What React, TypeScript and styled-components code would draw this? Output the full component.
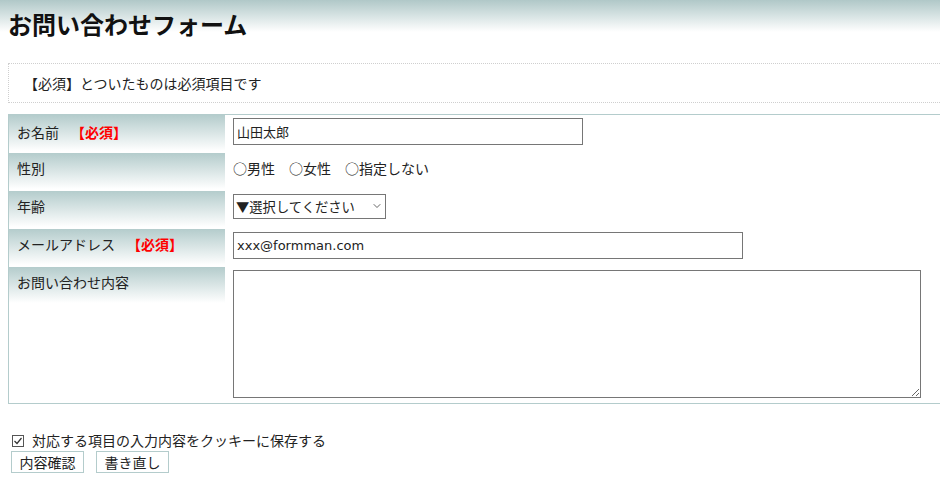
import React from "react";
import styled, { createGlobalStyle } from "styled-components";
import { ChevronDown } from "lucide-react";

const Global = createGlobalStyle`
  html, body { margin: 0; padding: 0; background: #fff; overflow: hidden; }
  body {
    font-family: "Noto Sans CJK JP", "Noto Sans", sans-serif;
    color: #222;
    font-size: 14px;
  }
`;

const Header = styled.header`
  background: linear-gradient(#b0c8c8 0px, #ffffff 32px);
  height: 50px;
  padding: 0 8px;
`;

const Title = styled.h1`
  margin: 0;
  font-size: 24px;
  font-weight: bold;
  line-height: 48px;
  color: #111;
`;

const Page = styled.main`
  padding-left: 8px;
  width: 1000px;
`;

const Notice = styled.p`
  margin: 13px 0 0;
  height: 40px;
  box-sizing: border-box;
  border: 1px dotted #cfcfcf;
  padding-left: 15px;
  line-height: 38px;
  font-size: 14px;
`;

const Table = styled.div`
  margin-top: 11px;
  border: 1px solid #b4cccc;
  display: flex;
  flex-direction: column;
`;

const Row = styled.div<{ $h?: number }>`
  display: flex;
  height: ${(p) => p.$h ?? 38}px;
`;

const Label = styled.div<{ $top?: number }>`
  width: 216px;
  box-sizing: border-box;
  padding: ${(p) => p.$top ?? 5}px 8px 0;
  line-height: 20px;
  background: #fff linear-gradient(#b4cccc 0px, #ffffff 36px) no-repeat;
  background-size: 100% 37px;
`;

const Required = styled.span`
  color: #f00;
  font-weight: bold;
  margin-left: 5px;
`;

const Value = styled.div`
  flex: 1;
  padding: 3px 0 0 8px;
`;

const TextInput = styled.input<{ $w: number }>`
  width: ${(p) => p.$w}px;
  height: 27px;
  box-sizing: border-box;
  border: 1px solid #767676;
  padding: 0 3px;
  font-family: "DejaVu Sans", "Noto Sans CJK JP", sans-serif;
  font-size: 13px;
  color: #222;
  outline: none;
  margin: 0;
`;

const Radios = styled.div`
  line-height: 24px;
  font-size: 14px;
  white-space: pre;
`;

const SelectWrap = styled.span`
  position: relative;
  display: inline-block;
`;

const Select = styled.select`
  appearance: none;
  width: 153px;
  height: 25px;
  box-sizing: border-box;
  border: 1px solid #767676;
  border-radius: 0;
  background: #fff;
  padding: 0 0 0 2px;
  font-family: "Noto Sans CJK JP", "Noto Sans", sans-serif;
  font-size: 13.3px;
  color: #222;
  margin: 0;
`;

const Chevron = styled(ChevronDown)`
  position: absolute;
  right: 3px;
  top: 6px;
  pointer-events: none;
  color: #333;
`;

const TextArea = styled.textarea`
  width: 688px;
  height: 128px;
  box-sizing: border-box;
  border: 1px solid #767676;
  margin: 0;
  display: block;
  font-family: "Noto Sans CJK JP", "Noto Sans", sans-serif;
  outline: none;
`;

const Footer = styled.div`
  padding: 26px 0 0 3px;
`;

const CheckLine = styled.label`
  display: flex;
  align-items: center;
  gap: 8px;
  line-height: 21px;
  font-size: 14px;
`;

const CheckBox = styled.span`
  width: 12px;
  height: 12px;
  box-sizing: border-box;
  border: 1px solid #555;
  margin-left: 1px;
  display: inline-flex;
  align-items: center;
  justify-content: center;
  background: #fff;
`;

const Buttons = styled.div`
  display: flex;
  gap: 12px;
`;

const Button = styled.button`
  height: 22px;
  box-sizing: border-box;
  padding: 0 7.5px;
  border: 1px solid #b4cccc;
  background: #fff;
  font-family: "Noto Sans CJK JP", "Noto Sans", sans-serif;
  font-size: 14px;
  line-height: 20px;
  color: #222;
  margin: 0;
`;

export default function App() {
  return (
    <>
      <Global />
      <Header>
        <Title>お問い合わせフォーム</Title>
      </Header>
      <Page>
        <Notice>【必須】とついたものは必須項目です</Notice>
        <Table>
          <Row>
            <Label $top={7}>
              お名前　<Required>【必須】</Required>
            </Label>
            <Value>
              <TextInput $w={350} defaultValue="山田太郎" />
            </Value>
          </Row>
          <Row>
            <Label>性別</Label>
            <Value>
              <Radios>○男性　○女性　○指定しない</Radios>
            </Value>
          </Row>
          <Row>
            <Label>年齢</Label>
            <Value>
              <SelectWrap>
                <Select defaultValue="">
                  <option value="">▼選択してください</option>
                </Select>
                <Chevron size={12} strokeWidth={1.5} />
              </SelectWrap>
            </Value>
          </Row>
          <Row>
            <Label>
              メールアドレス　<Required>【必須】</Required>
            </Label>
            <Value>
              <TextInput $w={510} defaultValue="xxx@formman.com" />
            </Value>
          </Row>
          <Row $h={136}>
            <Label $top={5}>お問い合わせ内容</Label>
            <Value>
              <TextArea />
            </Value>
          </Row>
        </Table>
        <Footer>
          <CheckLine>
            <CheckBox>
              <svg width="10" height="10" viewBox="0 0 10 10">
                <path d="M1.5 5 L4 7.5 L8.5 2" fill="none" stroke="#333" strokeWidth="1.2" />
              </svg>
            </CheckBox>
            対応する項目の入力内容をクッキーに保存する
          </CheckLine>
          <Buttons>
            <Button>内容確認</Button>
            <Button>書き直し</Button>
          </Buttons>
        </Footer>
      </Page>
    </>
  );
}
